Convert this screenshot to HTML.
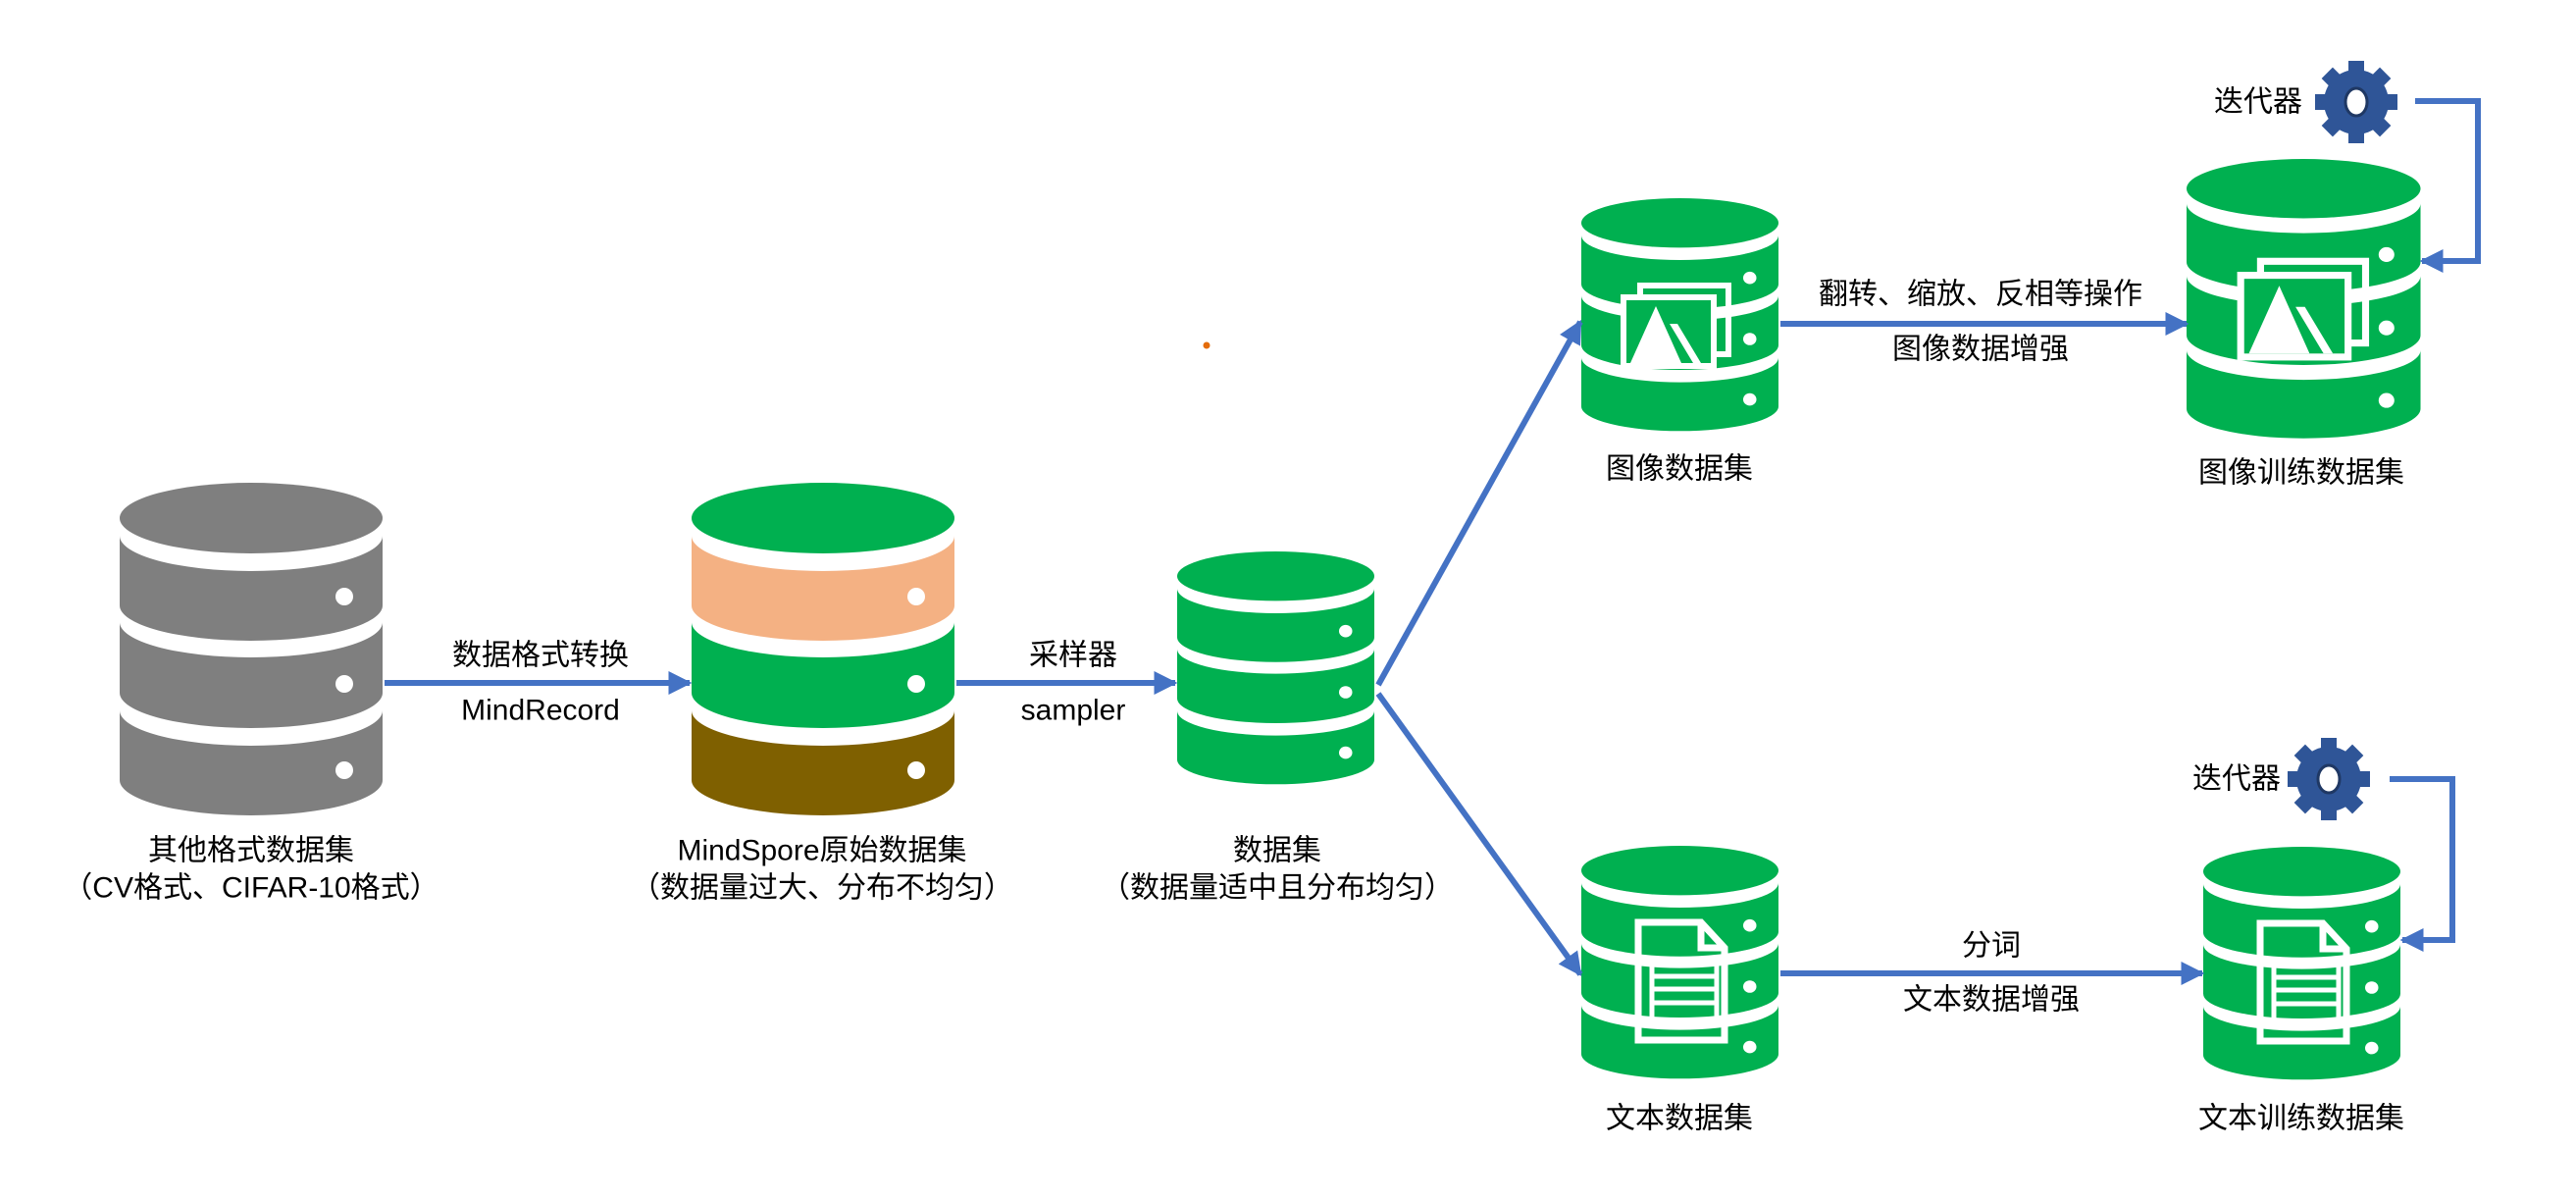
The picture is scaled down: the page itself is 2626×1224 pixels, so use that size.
<!DOCTYPE html>
<html><head><meta charset="utf-8"><style>
html,body{margin:0;padding:0;background:#fff}
svg{display:block}
text{font-family:"Liberation Sans","Noto Sans CJK SC",sans-serif;font-size:30px;fill:#000}
</style></head><body>
<svg width="2626" height="1224" viewBox="0 0 2626 1224" xmlns="http://www.w3.org/2000/svg">
<defs>
<marker id="ah" viewBox="0 0 10 10" refX="9" refY="5" markerWidth="4" markerHeight="4" orient="auto" markerUnits="strokeWidth">
<path d="M0,0 L10,5 L0,10 Z" fill="#4472c4"/>
</marker>
<g id="seg1"><path d="M0,54 A134,36 0 0 0 268,54 L268,125 A134,36 0 0 1 0,125 Z"/></g>
<g id="seg2"><path d="M0,142 A134,36 0 0 0 268,142 L268,214 A134,36 0 0 1 0,214 Z"/></g>
<g id="seg3"><path d="M0,232 A134,36 0 0 0 268,232 L268,303 A134,36 0 0 1 0,303 Z"/></g>
<g id="dots" fill="#fff"><circle cx="229" cy="116" r="9"/><circle cx="229" cy="205" r="9"/><circle cx="229" cy="293" r="9"/></g>
<g id="cylG" fill="#00b050"><ellipse cx="134" cy="36" rx="134" ry="36"/><use href="#seg1"/><use href="#seg2"/><use href="#seg3"/><use href="#dots"/></g>
<g id="imgIcon">
<rect x="-40" y="91" width="90" height="70" fill="none" stroke="#fff" stroke-width="6"/>
<rect x="-57" y="103" width="92" height="70" fill="#00b050" stroke="#fff" stroke-width="6"/>
<polygon points="-50,170 -24,112 2,170" fill="#fff"/>
<polygon points="-10,130 -2,130 22,170 14,170" fill="#fff"/>
</g>
<g id="docIcon" fill="none" stroke="#fff" stroke-width="7">
<path d="M-42,78 H22 L46,104 V198 H-42 Z"/>
<path d="M22,78 V104 H46"/>
<rect x="-28" y="118" width="66" height="60" stroke-width="5"/>
<path d="M-28,133 H38 M-28,146 H38 M-28,160 H38" stroke-width="5"/>
</g>
<g id="gear">
<circle r="33" fill="#2f5597"/>
<rect x="-8" y="-42" width="16" height="14" fill="#2f5597"/>
<rect x="-8" y="-42" width="16" height="14" fill="#2f5597" transform="rotate(45)"/>
<rect x="-8" y="-42" width="16" height="14" fill="#2f5597" transform="rotate(90)"/>
<rect x="-8" y="-42" width="16" height="14" fill="#2f5597" transform="rotate(135)"/>
<rect x="-8" y="-42" width="16" height="14" fill="#2f5597" transform="rotate(180)"/>
<rect x="-8" y="-42" width="16" height="14" fill="#2f5597" transform="rotate(225)"/>
<rect x="-8" y="-42" width="16" height="14" fill="#2f5597" transform="rotate(270)"/>
<rect x="-8" y="-42" width="16" height="14" fill="#2f5597" transform="rotate(315)"/>
<ellipse rx="11" ry="14" fill="#fff" stroke="#1f3864" stroke-width="3"/>
</g>
</defs>

<g transform="translate(122,492)" fill="#7f7f7f">
<ellipse cx="134" cy="36" rx="134" ry="36"/><use href="#seg1"/><use href="#seg2"/><use href="#seg3"/><use href="#dots"/>
</g>
<g transform="translate(705,492)">
<ellipse cx="134" cy="36" rx="134" ry="36" fill="#00b050"/>
<use href="#seg1" fill="#f4b183"/><use href="#seg2" fill="#00b050"/><use href="#seg3" fill="#7f6000"/><use href="#dots"/>
</g>
<g transform="translate(1200,562) scale(0.75,0.70)"><use href="#cylG"/></g>
<g transform="translate(1612,202) scale(0.75,0.70)"><use href="#cylG"/></g>
<g transform="translate(1712,200)"><use href="#imgIcon"/></g>
<g transform="translate(2229,162) scale(0.89,0.84)"><use href="#cylG"/></g>
<g transform="translate(2352,158) scale(1.19,1.19)"><use href="#imgIcon"/></g>
<g transform="translate(1612,862) scale(0.75,0.70)"><use href="#cylG"/></g>
<g transform="translate(1712,862)"><use href="#docIcon"/></g>
<g transform="translate(2246,863) scale(0.75,0.70)"><use href="#cylG"/></g>
<g transform="translate(2346,863)"><use href="#docIcon"/></g>

<g transform="translate(2402,104)"><use href="#gear"/></g>
<g transform="translate(2374,794)"><use href="#gear"/></g>

<g stroke="#4472c4" stroke-width="6" fill="none" marker-end="url(#ah)">
<line x1="392" y1="696" x2="703" y2="696"/>
<line x1="975" y1="696" x2="1198" y2="696"/>
<line x1="1405" y1="698" x2="1611" y2="328"/>
<line x1="1405" y1="707" x2="1611" y2="993"/>
<line x1="1815" y1="330" x2="2229" y2="330"/>
<line x1="1815" y1="992" x2="2245" y2="992"/>
<polyline points="2462,103 2526,103 2526,266 2469,266"/>
<polyline points="2436,794 2500,794 2500,958 2449,958"/>
</g>

<circle cx="1230" cy="352" r="3.5" fill="#e46c0a"/>

<g text-anchor="middle" dominant-baseline="central">
<text x="551" y="668">数据格式转换</text>
<text x="551" y="724">MindRecord</text>
<text x="1094" y="668">采样器</text>
<text x="1094" y="724">sampler</text>
<text x="2019" y="300">翻转、缩放、反相等操作</text>
<text x="2019" y="356">图像数据增强</text>
<text x="2030" y="964">分词</text>
<text x="2030" y="1019">文本数据增强</text>
<text x="256" y="867">其他格式数据集</text>
<text x="256" y="905">（CV格式、CIFAR-10格式）</text>
<text x="838" y="867">MindSpore原始数据集</text>
<text x="838" y="905">（数据量过大、分布不均匀）</text>
<text x="1302" y="867">数据集</text>
<text x="1302" y="905">（数据量适中且分布均匀）</text>
<text x="1712" y="478">图像数据集</text>
<text x="2346" y="482">图像训练数据集</text>
<text x="1712" y="1140">文本数据集</text>
<text x="2346" y="1140">文本训练数据集</text>
<text x="2302" y="104">迭代器</text>
<text x="2280" y="794">迭代器</text>
</g>
</svg>
</body></html>
